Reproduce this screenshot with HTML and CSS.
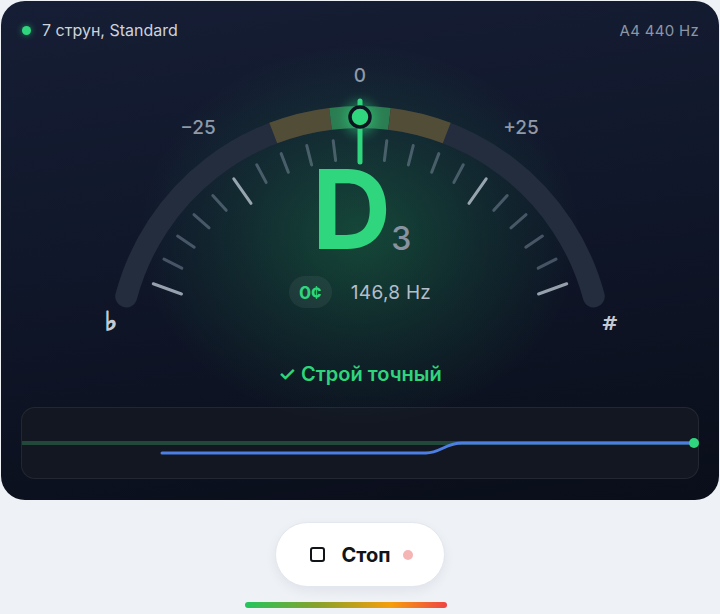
FILE: index.html
```html
<!DOCTYPE html>
<html lang="ru">
<head>
<meta charset="utf-8">
<title>Тюнер</title>
<link rel="stylesheet" href="styles.css">
</head>
<body>
<main class="card">
  <header class="top">
    <div class="tuning"><span class="live-dot"></span>7 струн, Standard</div>
    <div class="ref-pitch">A4 440 Hz</div>
  </header>

  <section class="gauge">
    <svg class="dial" viewBox="0 0 678 314" width="678" height="314" aria-hidden="true">
      <defs>
        <radialGradient id="halo" cx="0.5" cy="0.5" r="0.5">
          <stop offset="0" stop-color="#22c55e" stop-opacity="0.28"/>
          <stop offset="0.55" stop-color="#22c55e" stop-opacity="0.11"/>
          <stop offset="1" stop-color="#22c55e" stop-opacity="0"/>
        </radialGradient>
        <filter id="soft" x="-100%" y="-100%" width="300%" height="300%">
          <feGaussianBlur stdDeviation="6"/>
        </filter>
      </defs>

      <!-- green halo behind the note -->
      <ellipse cx="339" cy="195" rx="220" ry="190" fill="url(#halo)"/>

      <!-- track and tolerance zones -->
      <path class="track" d="M105.24 256.37 A242 242 0 0 1 572.76 256.37"/>
      <path class="zone warn" d="M252.27 93.07 A242 242 0 0 1 309.51 78.8"/>
      <path class="zone ok" d="M309.51 78.8 A242 242 0 0 1 368.49 78.8"/>
      <path class="zone warn" d="M368.49 78.8 A242 242 0 0 1 425.73 93.07"/>

      <!-- ticks every 5 cents, long ones at ±25 / ±50 -->
      <g class="ticks">
        <line class="major" x1="339" y1="99" x2="339" y2="129" transform="rotate(-70 339 319)"/>
        <line x1="339" y1="99" x2="339" y2="119" transform="rotate(-63 339 319)"/>
        <line x1="339" y1="99" x2="339" y2="119" transform="rotate(-56 339 319)"/>
        <line x1="339" y1="99" x2="339" y2="119" transform="rotate(-49 339 319)"/>
        <line x1="339" y1="99" x2="339" y2="119" transform="rotate(-42 339 319)"/>
        <line class="major" x1="339" y1="99" x2="339" y2="129" transform="rotate(-35 339 319)"/>
        <line x1="339" y1="99" x2="339" y2="119" transform="rotate(-28 339 319)"/>
        <line x1="339" y1="99" x2="339" y2="119" transform="rotate(-21 339 319)"/>
        <line x1="339" y1="99" x2="339" y2="119" transform="rotate(-14 339 319)"/>
        <line x1="339" y1="99" x2="339" y2="119" transform="rotate(-7 339 319)"/>
        <line x1="339" y1="99" x2="339" y2="119" transform="rotate(7 339 319)"/>
        <line x1="339" y1="99" x2="339" y2="119" transform="rotate(14 339 319)"/>
        <line x1="339" y1="99" x2="339" y2="119" transform="rotate(21 339 319)"/>
        <line x1="339" y1="99" x2="339" y2="119" transform="rotate(28 339 319)"/>
        <line class="major" x1="339" y1="99" x2="339" y2="129" transform="rotate(35 339 319)"/>
        <line x1="339" y1="99" x2="339" y2="119" transform="rotate(42 339 319)"/>
        <line x1="339" y1="99" x2="339" y2="119" transform="rotate(49 339 319)"/>
        <line x1="339" y1="99" x2="339" y2="119" transform="rotate(56 339 319)"/>
        <line x1="339" y1="99" x2="339" y2="119" transform="rotate(63 339 319)"/>
        <line class="major" x1="339" y1="99" x2="339" y2="129" transform="rotate(70 339 319)"/>
      </g>

      <!-- scale labels -->
      <text class="scale" x="339" y="42">0</text>
      <text class="scale" x="177" y="94">−25</text>
      <text class="scale" x="500" y="94">+25</text>
      <text class="accidental flat" x="90" y="290">♭</text>
      <text class="accidental" x="589" y="290">#</text>

      <!-- needle -->
      <circle cx="339" cy="78" r="16" fill="#2fd67e" opacity="0.5" filter="url(#soft)"/>
      <line class="needle" x1="339" y1="61" x2="339" y2="122"/>
      <circle class="needle-head" cx="339" cy="77" r="10"/>
    </svg>

    <div class="readout">
      <div class="note"><span class="letter">D</span><span class="octave">3</span></div>
      <div class="meta">
        <span class="cents">0¢</span>
        <span class="freq">146,8 Hz</span>
      </div>
    </div>
  </section>

  <p class="status">✓ Строй точный</p>

  <section class="trace">
    <svg viewBox="0 0 676 70" width="676" height="70" aria-hidden="true">
      <line class="target" x1="0" y1="35" x2="676" y2="35"/>
      <path class="pitch" d="M140 45 L404 45 C418 45 424 35 440 35 L672 35"/>
      <circle class="now" cx="672" cy="35" r="5"/>
    </svg>
  </section>
</main>

<div class="controls">
  <button class="stop" type="button"><span class="stop-icon"></span>Стоп<span class="rec-dot"></span></button>
  <div class="level"><div class="level-fill" style="width:202px"></div></div>
</div>
</body>
</html>
```

FILE: styles.css
```css
* {
  box-sizing: border-box;
}

html,
body {
  margin: 0;
  padding: 0;
}

body {
  background: #eef1f6;
  font-family: Inter, "Noto Sans", "DejaVu Sans", sans-serif;
  padding: 1px 1px 0;
  width: 720px;
  height: 614px;
  overflow: hidden;
}

/* ---------- tuner card ---------- */
.card {
  width: 718px;
  height: 499px;
  border-radius: 24px;
  background: linear-gradient(172deg, #161e35 0%, #10172a 45%, #0a0e1a 100%);
  padding: 19px 20px 21px;
  display: flex;
  flex-direction: column;
}

.top {
  display: flex;
  justify-content: space-between;
  align-items: center;
  height: 20px;
  padding: 0 0 0 1px;
}

.tuning {
  display: flex;
  align-items: center;
  gap: 11px;
  color: #cdd3dd;
  font-size: 16px;
}

.live-dot {
  width: 9px;
  height: 9px;
  border-radius: 50%;
  background: #2fd67e;
  box-shadow: 0 0 6px rgba(47, 214, 126, 0.6);
}

.ref-pitch {
  color: #8c96a6;
  font-size: 15px;
  letter-spacing: 0.3px;
}

/* ---------- dial ---------- */
.gauge {
  position: relative;
  height: 314px;
}

.dial {
  position: absolute;
  inset: 0;
  overflow: visible;
}

.track {
  fill: none;
  stroke: #242d3e;
  stroke-width: 22;
  stroke-linecap: round;
}

.zone {
  fill: none;
  stroke-width: 22;
}

.zone.warn {
  stroke: #514d37;
}

.zone.ok {
  stroke: #2c7c52;
}

.ticks line {
  stroke: rgba(148, 163, 184, 0.42);
  stroke-width: 3;
  stroke-linecap: round;
}

.ticks line.major {
  stroke: rgba(203, 213, 225, 0.72);
}

.scale {
  fill: #8f99a8;
  font-size: 19px;
  font-weight: 500;
  text-anchor: middle;
}

.accidental {
  fill: #c3cad4;
  font-size: 20px;
  font-weight: 700;
  text-anchor: middle;
  font-family: "DejaVu Sans", Inter, sans-serif;
}

/* the flat glyph is thin in DejaVu; a matching stroke gives it weight */
.accidental.flat {
  font-size: 26px;
  stroke: #c3cad4;
  stroke-width: 1.4;
}

.needle {
  stroke: #2fd67e;
  stroke-width: 5;
  stroke-linecap: round;
}

.needle-head {
  fill: #2fd67e;
  stroke: #0d1420;
  stroke-width: 3.5;
}

.readout {
  position: relative;
  padding-top: 114px;
  display: flex;
  flex-direction: column;
  align-items: center;
}

.note {
  display: flex;
  align-items: baseline;
  line-height: 110px;
  height: 110px;
  padding-left: 3px;
}

.letter {
  font-size: 110px;
  font-weight: 700;
  color: #2fd67e;
  letter-spacing: -1px;
}

.octave {
  font-size: 32px;
  font-weight: 500;
  color: #8892a0;
  margin-left: 1px;
  line-height: 1;
  position: relative;
  top: 1px;
}

.meta {
  margin-top: 12px;
  display: flex;
  align-items: center;
  gap: 19px;
}

.cents {
  height: 32px;
  width: 43px;
  border-radius: 16px;
  background: rgba(255, 255, 255, 0.06);
  color: #2fd67e;
  font-weight: 700;
  font-size: 18px;
  display: flex;
  align-items: center;
  justify-content: center;
}

.freq {
  color: #b5bdc9;
  font-size: 19px;
  letter-spacing: 0.3px;
}

/* ---------- status + history ---------- */
.status {
  margin: 8px 0 0;
  height: 24px;
  line-height: 24px;
  text-align: center;
  color: #2fd67e;
  font-size: 20px;
  font-weight: 600;
}

.trace {
  margin-top: 21px;
  height: 72px;
  border-radius: 14px;
  background: #131722;
  border: 1px solid rgba(255, 255, 255, 0.07);
}

.trace svg {
  display: block;
  overflow: visible;
}

.target {
  stroke: #22483a;
  stroke-width: 4;
}

.pitch {
  fill: none;
  stroke: #4d7ee3;
  stroke-width: 3;
  stroke-linecap: round;
  stroke-linejoin: round;
}

.now {
  fill: #2fd67e;
}

/* ---------- controls under the card ---------- */
.controls {
  display: flex;
  flex-direction: column;
  align-items: center;
  padding-top: 22px;
  padding-right: 1px;
}

.stop {
  width: 170px;
  height: 65px;
  border-radius: 33px;
  border: 1px solid #e3e7ee;
  background: #ffffff;
  box-shadow: 0 4px 12px rgba(15, 23, 42, 0.06);
  display: flex;
  align-items: center;
  justify-content: center;
  padding: 0 0 0 4px;
  font-family: Inter, "Noto Sans", sans-serif;
  font-size: 20px;
  font-weight: 700;
  color: #111418;
}

.stop-icon {
  width: 15px;
  height: 15px;
  border: 2px solid #111418;
  border-radius: 3px;
  margin-right: 16px;
}

.rec-dot {
  width: 10px;
  height: 10px;
  border-radius: 50%;
  background: #f5b5b5;
  margin-left: 12px;
}

.level {
  margin-top: 15px;
  width: 230px;
  height: 6px;
}

.level-fill {
  height: 6px;
  border-radius: 3px;
  background: linear-gradient(90deg, #22c55e 0%, #84a22c 35%, #f59e0b 72%, #ef4444 100%);
}
```
